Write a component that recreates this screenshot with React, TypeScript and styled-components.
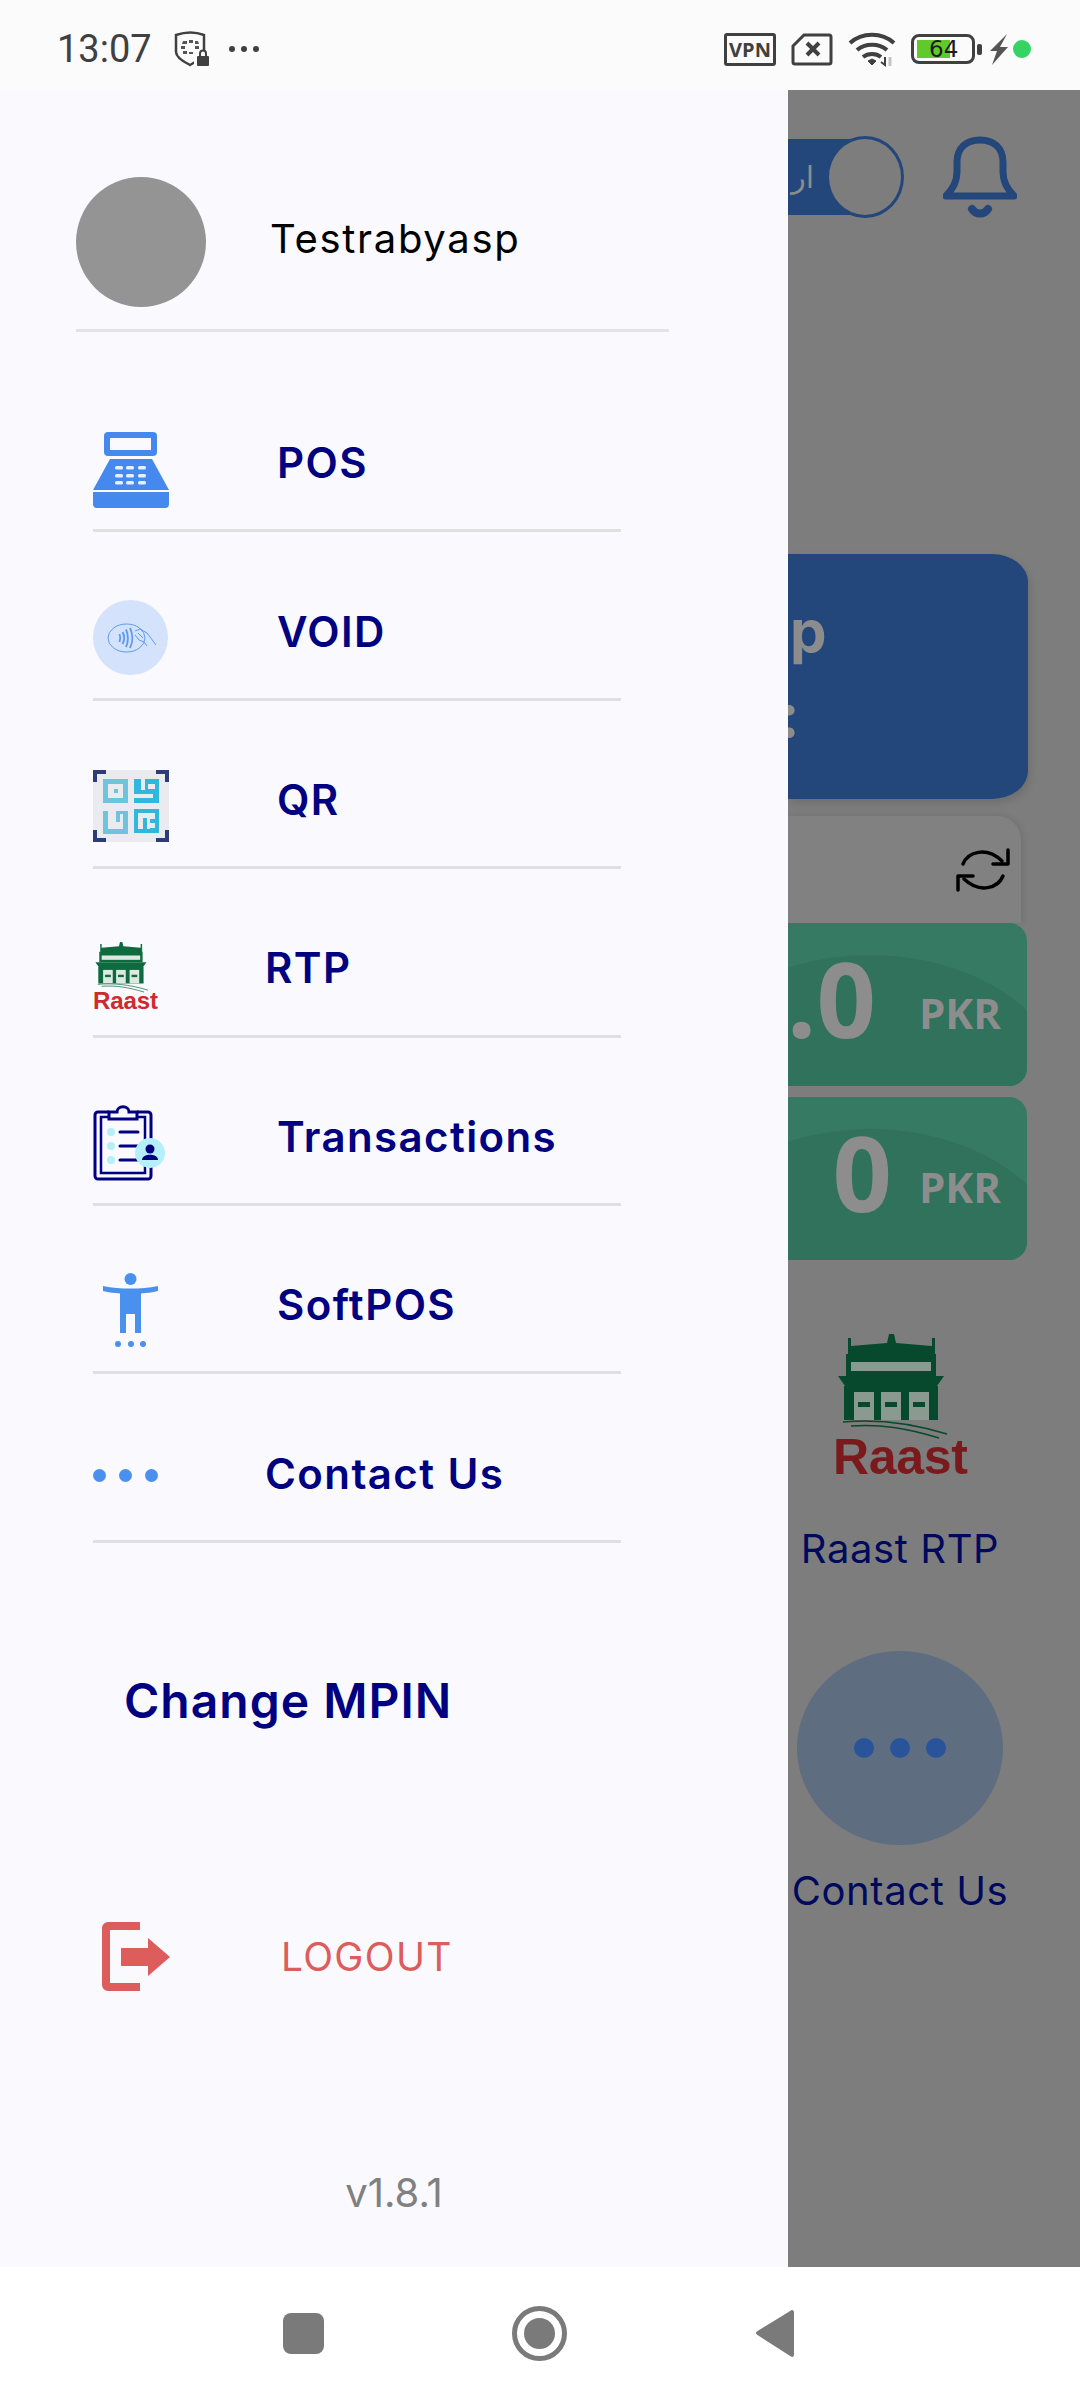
import styled, { createGlobalStyle } from 'styled-components';

const NAVY = '#000080';
const SANS = "Inter, 'Noto Sans', sans-serif";

const Global = createGlobalStyle`
  html, body {
    background: #fff;
    margin: 0;
    padding: 0;
  }

  * {
    box-sizing: border-box;
  }
`;

const S = {
  Page: styled.div`
    display: flex;
    flex-direction: column;
    font-family: ${SANS};
    height: 2400px;
    overflow: hidden;
    width: 1080px;
  `,

  StatusBar: styled.header`
    align-items: center;
    background: #fbfbfb;
    color: #404040;
    display: flex;
    height: 90px;
    justify-content: space-between;
    padding: 8px 49px 0 57px;
  `,
  StatusGroup: styled.div<{ $gap: number }>`
    align-items: center;
    display: flex;
    gap: ${({ $gap }) => $gap}px;
  `,
  Clock: styled.span`
    font-family: Roboto, sans-serif;
    font-size: 38px;
    margin-right: 4px;
  `,
  VpnBadge: styled.span`
    align-items: center;
    border: 3px solid #404040;
    border-radius: 3px;
    display: flex;
    font-family: 'Open Sans', sans-serif;
    font-size: 20px;
    font-weight: 700;
    height: 33px;
    justify-content: center;
    width: 52px;
  `,
  Battery: styled.div`
    align-items: center;
    border: 3px solid #404040;
    border-radius: 8px;
    display: flex;
    height: 30px;
    margin-right: 9px;
    padding: 3px;
    position: relative;
    width: 64px;

    &::after {
      background: #404040;
      border-radius: 2px;
      content: '';
      height: 11px;
      position: absolute;
      right: -10px;
      width: 5px;
    }
  `,
  BatteryFill: styled.div`
    background: #62c92c;
    height: 100%;
    width: 64%;
  `,
  BatteryText: styled.span`
    color: #1c1c1c;
    font-family: 'DejaVu Sans', sans-serif;
    font-size: 23px;
    left: 15px;
    position: absolute;
  `,
  GreenDot: styled.span`
    background: #34d364;
    border-radius: 50%;
    height: 18px;
    width: 18px;
  `,

  Main: styled.main`
    display: flex;
    height: 2177px;
  `,

  Drawer: styled.nav`
    background: #f9f9fe;
    display: flex;
    flex: 0 0 788px;
    flex-direction: column;
  `,
  Profile: styled.div`
    align-items: center;
    border-bottom: 3px solid #e3e3e3;
    display: flex;
    gap: 64px;
    height: 155px;
    margin: 87px 119px 0 76px;
    padding-bottom: 22px;
  `,
  Avatar: styled.div`
    background: #949494;
    border-radius: 50%;
    height: 130px;
    width: 130px;
  `,
  UserName: styled.span`
    color: #000;
    font-size: 40px;
    letter-spacing: 1.7px;
    margin-top: -8px;
  `,
  Menu: styled.ul`
    list-style: none;
    margin: 32px 167px 0 93px;
    padding: 0;
  `,
  Row: styled.li`
    align-items: center;
    border-bottom: 3px solid #e0e0e0;
    display: flex;
    height: 168.4px;
    padding-top: 32px;
  `,
  IconSlot: styled.div<{ $width: number; $shift: number }>`
    display: flex;
    flex: 0 0 ${({ $width }) => $width}px;
    margin-top: ${({ $shift }) => $shift * 2}px;
  `,
  RowLabel: styled.span`
    color: ${NAVY};
    font-size: 42px;
    font-weight: 600;
    letter-spacing: 1.4px;
  `,
  ChangePin: styled.div`
    color: ${NAVY};
    font-size: 48px;
    font-weight: 600;
    letter-spacing: 1px;
    line-height: 60px;
    margin: 128px 0 0 124px;
  `,
  Logout: styled.div`
    align-items: center;
    display: flex;
    gap: 111px;
    margin: 191px 0 0 102px;
  `,
  LogoutLabel: styled.span`
    color: #dd5c5c;
    font-size: 39px;
    letter-spacing: 1.3px;
  `,
  Version: styled.div`
    color: #808080;
    font-size: 40px;
    line-height: 50px;
    margin-top: 177px;
    text-align: center;
  `,

  Backdrop: styled.section`
    background: #7d7d7e;
    display: flex;
    flex: 1;
    flex-direction: column;
    min-width: 0;
    overflow: hidden;
  `,
  TopRow: styled.div`
    align-items: center;
    display: flex;
    height: 82px;
    justify-content: flex-end;
    margin-top: 46px;
    padding-right: 63px;
  `,
  ToggleTrack: styled.div`
    align-items: center;
    background: #23477b;
    color: #8c8c8c;
    display: flex;
    font-family: 'DejaVu Sans', sans-serif;
    font-size: 30px;
    height: 76px;
    justify-content: flex-end;
    padding-right: 50px;
    width: 76px;
  `,
  ToggleKnob: styled.div`
    background: #7d7d7e;
    border: 3px solid #23477b;
    border-radius: 50%;
    height: 82px;
    margin: 0 39px 0 -38px;
    width: 78px;
  `,
  BlueCard: styled.div`
    background: #23477b;
    border-radius: 0 36px 36px 0 / 0 28px 28px 0;
    box-shadow: 2px 4px 8px rgba(0, 0, 0, 0.12);
    color: #8c8c8c;
    font-weight: 700;
    height: 245px;
    margin: 336px 52px 0 0;
    overflow: hidden;
    padding: 42px 0 0 2px;
  `,
  BlueLine: styled.div`
    font-size: 58px;
    line-height: 70px;
  `,
  BlueColon: styled.div`
    font-size: 62px;
    line-height: 70px;
    margin: 14px 0 0 -11px;
  `,
  SyncCard: styled.div`
    align-items: center;
    background: #818181;
    border-radius: 0 24px 0 0;
    box-shadow: 2px 0 6px rgba(0, 0, 0, 0.1);
    display: flex;
    height: 107px;
    justify-content: flex-end;
    margin: 17px 59px 0 0;
    padding: 0 11px 0 0;
  `,
  Balance: styled.div<{ $top: number }>`
    align-items: center;
    background: #377a64;
    border-radius: 0 18px 18px 0;
    color: #8d8d8d;
    display: flex;
    font-family: 'Open Sans', sans-serif;
    font-weight: 700;
    height: 163px;
    justify-content: flex-end;
    margin: ${({ $top }) => $top}px 53px 0 0;
    overflow: hidden;
    padding-right: 26px;
    position: relative;

    &::before {
      background: #30725b;
      border-radius: 50%;
      content: '';
      height: 290px;
      left: -118px;
      position: absolute;
      top: 32px;
      width: 400px;
    }
  `,
  Amount: styled.span<{ $gap: number }>`
    font-size: 104px;
    margin: -14px ${({ $gap }) => $gap}px 0 0;
    position: relative;
    white-space: nowrap;
  `,
  Currency: styled.span`
    font-size: 42px;
    margin-top: 16px;
    position: relative;
  `,
  Shortcuts: styled.div`
    align-items: center;
    display: flex;
    flex-direction: column;
    padding: 74px 68px 0 0;
  `,
  ShortcutLabel: styled.span<{ $top: number }>`
    color: #000a5c;
    font-size: 40px;
    letter-spacing: 0.6px;
    line-height: 46px;
    margin-top: ${({ $top }) => $top}px;
    white-space: nowrap;
  `,
  MoreCircle: styled.div`
    align-items: center;
    background: #5f6d80;
    border-radius: 50%;
    display: flex;
    gap: 16px;
    height: 194px;
    justify-content: center;
    margin-top: 79px;
    width: 206px;
  `,
  MoreDot: styled.span`
    background: #2a5499;
    border-radius: 50%;
    height: 20px;
    width: 20px;
  `,

  NavBar: styled.footer`
    align-items: center;
    background: #fff;
    display: flex;
    flex: 1;
    padding-left: 283px;
  `,
  NavSquare: styled.div`
    background: #7a7a7a;
    border-radius: 8px;
    height: 41px;
    margin-right: 188px;
    width: 41px;
  `,
  NavHome: styled.div`
    align-items: center;
    border: 5px solid #7a7a7a;
    border-radius: 50%;
    display: flex;
    height: 55px;
    justify-content: center;
    margin-right: 189px;
    width: 55px;
  `,
  NavHomeDot: styled.div`
    background: #7a7a7a;
    border-radius: 50%;
    height: 31px;
    width: 31px;
  `,
};

function ShieldIcon() {
  return (
    <svg width="36" height="36" viewBox="0 0 36 36" fill="none">
      <path d="M2 4c9-3 20-3 28 0v17c0 4-8 10-14 13C10 31 2 26 2 21z" stroke="#404040" strokeWidth="2.5" />
      <path
        fill="#555"
        d="M9 10h4v3H8zM15 9h4v3h-4zM21 10h3l1 3h-4zM7 15h4v3H7zM21 15h4v3h-4zM9 20h4v3H9zM15 21h4v2h-4zM21 20h3v3h-3z"
      />
      <rect x="20" y="20" width="16" height="16" fill="#fbfbfb" />
      <rect x="23" y="25" width="12" height="10" rx="1" fill="#404040" />
      <path d="M26 25v-2.500a3 3 0 0 1 6 0V25" stroke="#404040" strokeWidth="2" />
    </svg>
  );
}

function DotsIcon() {
  return (
    <svg width="32" height="8" viewBox="0 0 32 8" fill="#404040">
      <circle cx="4" cy="4" r="3" />
      <circle cx="16" cy="4" r="3" />
      <circle cx="28" cy="4" r="3" />
    </svg>
  );
}

function SimOffIcon() {
  return (
    <svg width="42" height="33" viewBox="0 0 42 33" fill="none" stroke="#404040">
      <path d="M2 13 13 2h25a2 2 0 0 1 2 2v25a2 2 0 0 1-2 2H4a2 2 0 0 1-2-2z" strokeWidth="3" />
      <path d="m16 10 12 12M28 10 16 22" strokeWidth="4" />
    </svg>
  );
}

function WifiIcon() {
  return (
    <svg width="48" height="35" viewBox="0 0 48 35" fill="none" stroke="#404040" strokeWidth="4">
      <path d="M2 11c12-11 32-11 44 0" />
      <path d="M9 18c8-7 22-7 30 0" />
      <path d="M15 25c5-4 13-4 18 0" />
      <path d="m20 29 4-2 4 2-4 4z" fill="#404040" strokeWidth="1" />
      <path d="M37 25v8l-4-3" strokeWidth="2" />
      <path d="M42 25v9" stroke="#c4c4c4" strokeWidth="3" />
    </svg>
  );
}

function BoltIcon() {
  return (
    <svg width="19" height="31" viewBox="0 0 19 31" fill="#555">
      <path d="M18 0 1 17h7l-5 14 16-18h-8z" />
    </svg>
  );
}

function BellIcon() {
  return (
    <svg width="74" height="82" viewBox="0 0 74 82" fill="none" stroke="#23477b" strokeWidth="7" strokeLinejoin="round">
      <path d="M3 60c6-6 11-13 11-24V26C14 12 23 4 37 4s23 8 23 22v10c0 11 5 18 11 24z" />
      <path d="M29 73c4 6 12 6 16 0" strokeWidth="8" strokeLinecap="round" />
    </svg>
  );
}

function PosIcon() {
  return (
    <svg width="76" height="76" viewBox="0 0 76 76" fill="#4689ee">
      <path fillRule="evenodd" d="M15 0h45a4 4 0 0 1 4 4v16a4 4 0 0 1-4 4H15a4 4 0 0 1-4-4V4a4 4 0 0 1 4-4zm2 6v12h41V6z" />
      <path d="M17 27h42l17 31H0z" />
      <path d="M0 60h76v12a4 4 0 0 1-4 4H4a4 4 0 0 1-4-4z" />
      <g fill="#e8effc">
        {[34, 42, 49].map((y) =>
          [22, 33, 45].map((x) => <rect key={`${x}-${y}`} x={x} y={y} width="8" height="3.5" rx="1.5" />),
        )}
      </g>
    </svg>
  );
}

function TapIcon() {
  return (
    <svg width="75" height="75" viewBox="0 0 75 75">
      <circle cx="37.5" cy="37.5" r="37.5" fill="#d4e2fb" />
      <g fill="none" stroke="#5c9cf0">
        <ellipse cx="33.5" cy="38" rx="18.500" ry="14" strokeWidth="1" />
        <path
          d="M26.500 34c1 2.500 1 5.500 0 8M29.500 32c2 3.500 2 8.500 0 12M33 29.500c2.500 5 2.500 12.500 0 17.500M37 28c3 6 3 14 0 20"
          strokeWidth="1.900"
        />
        <path d="M42 31l5-2 7 4 9 12M42 35l4 5 5 2 3 4M45 33l5 5" strokeWidth="1" />
      </g>
    </svg>
  );
}

function QrIcon() {
  return (
    <svg width="76" height="72" viewBox="0 0 76 72">
      <rect width="76" height="72" fill="#e9ebef" />
      <path fill="#2d3c78" d="M0 0h13v4H4v8H0zM63 0h13v12h-4V4h-9zM0 60h4v8h9v4H0zM72 60h4v12H63v-4h9z" />
      <rect x="10" y="9" width="25" height="24" fill="#6ec4dc" />
      <rect x="15" y="14" width="15" height="14" fill="#e9ebef" />
      <rect x="21" y="19" width="4" height="4" fill="#6ec4dc" />
      <rect x="41" y="9" width="25" height="24" fill="#2fb7dc" />
      <rect x="48" y="9" width="4" height="11" fill="#e9ebef" />
      <rect x="55" y="14" width="7" height="5" fill="#e9ebef" />
      <rect x="41" y="24" width="19" height="4" fill="#e9ebef" />
      <rect x="10" y="41" width="25" height="23" fill="#6ec4dc" />
      <rect x="15" y="41" width="8" height="18" fill="#e9ebef" />
      <rect x="23" y="52" width="7" height="7" fill="#e9ebef" />
      <rect x="27" y="44" width="3" height="10" fill="#e9ebef" />
      <rect x="41" y="39" width="25" height="24" fill="#2fb7dc" />
      <rect x="45" y="43" width="12" height="16" fill="#e9ebef" />
      <rect x="57" y="43" width="5" height="6" fill="#e9ebef" />
      <rect x="50" y="48" width="4" height="11" fill="#2fb7dc" />
      <rect x="57" y="53" width="5" height="5" fill="#e9ebef" />
    </svg>
  );
}

function RaastLogo({ width, dim }: { width: number; dim?: boolean }) {
  const green = dim ? '#07492c' : '#0e6b3f';
  const light = dim ? '#8b9a91' : '#dfe9e3';
  const red = dim ? '#7a1a1c' : '#cf2a2d';
  return (
    <svg width={width} viewBox="0 0 135 142">
      <path fill={green} d="M15 4h3v8l36-3 2-9h5l2 9 36 3V4h3v16H15zM13 20h90v22H13z" />
      <rect x="18" y="28" width="80" height="9" fill={light} />
      <path fill={green} d="M5 42h106l-7 10H12zM11 52h94v34H11z" />
      <g fill={light}>
        <rect x="21" y="58" width="20" height="28" />
        <rect x="48" y="58" width="20" height="28" />
        <rect x="76" y="58" width="20" height="28" />
      </g>
      <g fill={green}>
        <rect x="25" y="68" width="12" height="5" />
        <rect x="52" y="68" width="12" height="5" />
        <rect x="80" y="68" width="12" height="5" />
      </g>
      <path d="M10 88c30-3 65 0 104 12M18 92c30-2 55 2 88 12" fill="none" stroke={green} strokeWidth="1.500" />
      <text x="0" y="140" fontFamily="'Liberation Sans', sans-serif" fontWeight="700" fontSize="50" fill={red} textLength="135">
        Raast
      </text>
    </svg>
  );
}

function ClipboardIcon() {
  return (
    <svg width="72" height="76" viewBox="0 0 72 76" fill="none">
      <path d="M16 7H5a3 3 0 0 0-3 3v61a3 3 0 0 0 3 3h50a3 3 0 0 0 3-3V10a3 3 0 0 0-3-3H44" stroke="#000080" strokeWidth="3" />
      <path d="M16 12H8v56h44V12h-8" stroke="#000080" strokeWidth="2.500" />
      <path d="M16 14V7h8c0-7 12-7 12 0h8v7z" stroke="#000080" strokeWidth="3" fill="#f9f9fe" />
      <g fill="#b5effa">
        <circle cx="18" cy="27" r="4" />
        <circle cx="18" cy="41" r="4" />
        <circle cx="18" cy="55" r="4" />
      </g>
      <path d="M27 27h18M27 41h18M27 55h18" stroke="#000080" strokeWidth="3" strokeLinecap="round" />
      <circle cx="57" cy="48" r="15" fill="#b5effa" />
      <circle cx="57" cy="44" r="4.500" fill="#000080" />
      <path d="M49 55c0-7 16-7 16 0z" fill="#000080" />
    </svg>
  );
}

function PersonIcon() {
  return (
    <svg width="65" height="75" viewBox="-10 0 65 75" fill="#4a90ee">
      <ellipse cx="27.5" cy="6" rx="6" ry="6" />
      <path d="M0 13c9 2 18 2.500 27.500 2.500S46 15 55 13v5c-6 1.500-12 2-17 2.500V60h-6V41h-9v19h-6V20.500C12 20 6 19.500 0 18z" />
      <circle cx="15" cy="71" r="3" />
      <circle cx="28" cy="71" r="3" />
      <circle cx="40" cy="71" r="3" />
    </svg>
  );
}

function MoreIcon() {
  return (
    <svg width="65" height="13" viewBox="0 0 65 13" fill="#4a90ee">
      <ellipse cx="6.500" cy="6.500" rx="6.500" ry="6.500" />
      <ellipse cx="32.500" cy="6.500" rx="6.500" ry="6.500" />
      <ellipse cx="58.500" cy="6.500" rx="6.500" ry="6.500" />
    </svg>
  );
}

function LogoutIcon() {
  return (
    <svg width="68" height="69" viewBox="0 0 68 69" fill="#dd5c5c">
      <path d="M38 0v8H8v53h30v8H6a6 6 0 0 1-6-6V6a6 6 0 0 1 6-6z" />
      <path d="M19 26h27V16l22 19-22 19V44H19z" />
    </svg>
  );
}

function SyncIcon() {
  return (
    <svg width="54" height="46" viewBox="0 0 54 46" fill="none" stroke="#000" strokeWidth="3.500" strokeLinecap="round" strokeLinejoin="round">
      <path d="M7 17C12 5 30-1 46 14" />
      <path d="M52 3v14H37" />
      <path d="M47 29C42 41 24 47 8 32" />
      <path d="M2 43V29h15" />
    </svg>
  );
}

function NavBack() {
  return (
    <svg width="38" height="47" viewBox="0 0 38 47" fill="#7a7a7a">
      <path d="M35 .5c1.500-1 3 0 3 2v42c0 2-1.500 3-3 2L1.500 25c-2-1-2-3 0-4z" />
    </svg>
  );
}

const rows = [
  { label: 'POS', icon: <PosIcon />, slot: 184, shift: 7 },
  { label: 'VOID', icon: <TapIcon />, slot: 184, shift: 6 },
  { label: 'QR', icon: <QrIcon />, slot: 184, shift: 7 },
  { label: 'RTP', icon: <RaastLogo width={65} />, slot: 172, shift: 8 },
  { label: 'Transactions', icon: <ClipboardIcon />, slot: 184, shift: 7 },
  { label: 'SoftPOS', icon: <PersonIcon />, slot: 184, shift: 6 },
  { label: 'Contact Us', icon: <MoreIcon />, slot: 172, shift: 2 },
];

export default function App() {
  return (
    <S.Page>
      <Global />
      <S.StatusBar>
        <S.StatusGroup $gap={18}>
          <S.Clock>13:07</S.Clock>
          <ShieldIcon />
          <DotsIcon />
        </S.StatusGroup>
        <S.StatusGroup $gap={15}>
          <S.VpnBadge>VPN</S.VpnBadge>
          <SimOffIcon />
          <WifiIcon />
          <S.StatusGroup $gap={5}>
            <S.Battery>
              <S.BatteryFill />
              <S.BatteryText>64</S.BatteryText>
            </S.Battery>
            <BoltIcon />
            <S.GreenDot />
          </S.StatusGroup>
        </S.StatusGroup>
      </S.StatusBar>

      <S.Main>
        <S.Drawer>
          <S.Profile>
            <S.Avatar />
            <S.UserName>Testrabyasp</S.UserName>
          </S.Profile>
          <S.Menu>
            {rows.map((row) => (
              <S.Row key={row.label}>
                <S.IconSlot $width={row.slot} $shift={row.shift}>
                  {row.icon}
                </S.IconSlot>
                <S.RowLabel>{row.label}</S.RowLabel>
              </S.Row>
            ))}
          </S.Menu>
          <S.ChangePin>Change MPIN</S.ChangePin>
          <S.Logout>
            <LogoutIcon />
            <S.LogoutLabel>LOGOUT</S.LogoutLabel>
          </S.Logout>
          <S.Version>v1.8.1</S.Version>
        </S.Drawer>

        <S.Backdrop>
          <S.TopRow>
            <S.ToggleTrack>ار</S.ToggleTrack>
            <S.ToggleKnob />
            <BellIcon />
          </S.TopRow>
          <S.BlueCard>
            <S.BlueLine>p</S.BlueLine>
            <S.BlueColon>:</S.BlueColon>
          </S.BlueCard>
          <S.SyncCard>
            <SyncIcon />
          </S.SyncCard>
          <S.Balance $top={0}>
            <S.Amount $gap={43}>0.0</S.Amount>
            <S.Currency>PKR</S.Currency>
          </S.Balance>
          <S.Balance $top={11}>
            <S.Amount $gap={27}>0</S.Amount>
            <S.Currency>PKR</S.Currency>
          </S.Balance>
          <S.Shortcuts>
            <RaastLogo width={135} dim />
            <S.ShortcutLabel $top={50}>Raast RTP</S.ShortcutLabel>
            <S.MoreCircle>
              <S.MoreDot />
              <S.MoreDot />
              <S.MoreDot />
            </S.MoreCircle>
            <S.ShortcutLabel $top={23}>Contact Us</S.ShortcutLabel>
          </S.Shortcuts>
        </S.Backdrop>
      </S.Main>

      <S.NavBar>
        <S.NavSquare />
        <S.NavHome>
          <S.NavHomeDot />
        </S.NavHome>
        <NavBack />
      </S.NavBar>
    </S.Page>
  );
}
